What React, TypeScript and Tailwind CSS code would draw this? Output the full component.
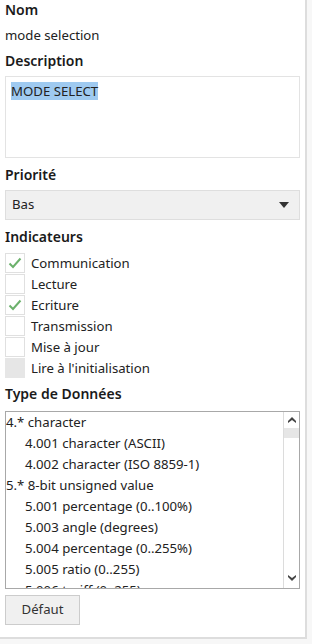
import React from "react";

const flags = [
  { label: "Communication", checked: true },
  { label: "Lecture", checked: false },
  { label: "Ecriture", checked: true },
  { label: "Transmission", checked: false },
  { label: "Mise à jour", checked: false },
  { label: "Lire à l'initialisation", checked: false, disabled: true },
];

const types = [
  { text: "4.* character", indent: false },
  { text: "4.001 character (ASCII)", indent: true },
  { text: "4.002 character (ISO 8859-1)", indent: true },
  { text: "5.* 8-bit unsigned value", indent: false },
  { text: "5.001 percentage (0..100%)", indent: true },
  { text: "5.003 angle (degrees)", indent: true },
  { text: "5.004 percentage (0..255%)", indent: true },
  { text: "5.005 ratio (0..255)", indent: true },
  { text: "5.006 tariff (0..255)", indent: true },
];

function Check() {
  return (
    <svg width="14" height="12" viewBox="0 0 14 12">
      <path d="M1.5 6.5 L5 10 L12.5 1.5" fill="none" stroke="#6cb16c" strokeWidth="2" />
    </svg>
  );
}

function Label({ children }: { children: React.ReactNode }) {
  return <div className="text-[14px] font-semibold leading-[20px] text-[#1a1a1a]">{children}</div>;
}

export default function App() {
  return (
    <div className="w-[312px] h-[644px] bg-[#f7f7f7] overflow-hidden text-[13.2px] text-[#222]" style={{ fontFamily: '"Noto Sans", sans-serif' }}>
      <div className="flex">
        <div className="w-[307px] h-[639px] bg-white border-r-2 border-b-2 border-[#dddddd] px-[5px]">
          <Label>Nom</Label>
          <div className="mt-[5px] leading-[20px]">mode selection</div>
          <div className="mt-[6px]">
            <Label>Description</Label>
          </div>
          <div className="mt-[5px] w-[295px] h-[82px] border border-[#e3e3e3] px-[5px] pt-[5px]">
            <span className="bg-[#9fcaf0] leading-[18px] inline-block">MODE SELECT</span>
          </div>
          <div className="mt-[7px]">
            <Label>Priorité</Label>
          </div>
          <div className="mt-[5px] w-[295px] h-[30px] bg-[#f0f0f0] border border-[#dedede] flex items-center justify-between pl-[6px] pr-[10px]">
            <span>Bas</span>
            <svg width="10" height="6" viewBox="0 0 10 6">
              <path d="M0 0 L10 0 L5 6 Z" fill="#333" />
            </svg>
          </div>
          <div className="mt-[7px]">
            <Label>Indicateurs</Label>
          </div>
          <div className="mt-[5px] flex flex-col">
            {flags.map((f) => (
              <div key={f.label} className="flex items-center h-[21px]">
                <div
                  className={
                    f.disabled
                      ? "w-[20px] h-[20px] bg-[#e6e6e6] flex items-center justify-center"
                      : "w-[20px] h-[20px] border border-[#e0e0e0] bg-white flex items-center justify-center"
                  }
                >
                  {f.checked && <Check />}
                </div>
                <span className="ml-[6px] leading-[20px]">{f.label}</span>
              </div>
            ))}
          </div>
          <div className="mt-[6px]">
            <Label>Type de Données</Label>
          </div>
          <div className="mt-[7px] w-[295px] h-[178px] border border-[#a8a8a8] flex overflow-hidden">
            <div className="flex-1 overflow-hidden">
              {types.map((t) => (
                <div key={t.text} className={t.indent ? "h-[21px] leading-[21px] pl-[19px] whitespace-nowrap" : "h-[21px] leading-[21px] whitespace-nowrap"}>
                  {t.text}
                </div>
              ))}
            </div>
            <div className="w-[16px] border-l border-[#dcdcdc] flex flex-col items-center">
              <svg className="mt-[5px]" width="8" height="6" viewBox="0 0 8 6">
                <path d="M4 0 L8 4 L8 6 L4 3 L0 6 L0 4 Z" fill="#444" />
              </svg>
              <div className="mt-[5px] w-[15px] h-[10px] bg-[#e6e6e6]" />
              <div className="flex-1" />
              <svg className="mb-[7px]" width="8" height="6" viewBox="0 0 8 6">
                <path d="M0 0 L4 3 L8 0 L8 2 L4 6 L0 2 Z" fill="#444" />
              </svg>
            </div>
          </div>
          <button className="mt-[6px] w-[75px] h-[30px] bg-[#f0f0f0] border border-[#cccccc] text-[#333]">
            Défaut
          </button>
        </div>
      </div>
    </div>
  );
}
